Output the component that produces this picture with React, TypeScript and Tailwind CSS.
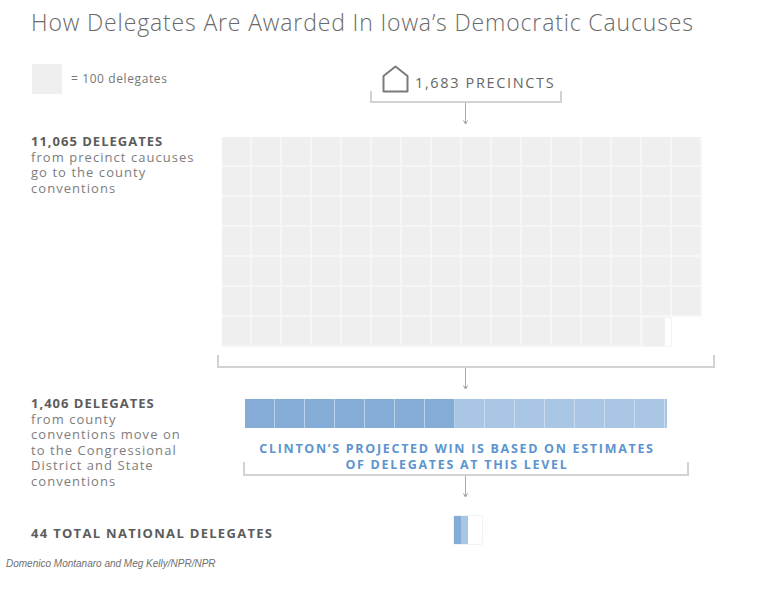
import React from "react";

const COLS = 16;
const TOTAL_COUNTY = 11065;

const Arrow = ({ className = "" }: { className?: string }) => (
  <svg width="7" height="22" viewBox="0 0 7 22" className={className}>
    <line x1="3.5" y1="0" x2="3.5" y2="20" stroke="#aaa" strokeWidth="1" />
    <path d="M1.5 17.5 L3.5 21 L5.5 17.5" fill="none" stroke="#999" strokeWidth="1" />
  </svg>
);

const House = () => (
  <svg width="27" height="28" viewBox="0 0 27 28" className="shrink-0">
    <path d="M1.5 11 L13.5 1.5 L25.5 11 V26.5 H1.5 Z" fill="none" stroke="#7a7a7a" strokeWidth="2" strokeLinejoin="round" />
  </svg>
);

const CountyGrid = () => {
  const full = Math.floor(TOTAL_COUNTY / 100);
  const frac = (TOTAL_COUNTY % 100) / 100;
  const rows = Math.ceil((full + 1) / COLS);
  const cells: React.ReactNode[] = [];
  for (let i = 0; i < rows * COLS; i++) {
    if (i < full) {
      cells.push(<div key={i} className="w-[30px] h-[30px] bg-[#efefef] border-r-2 border-b-2 border-[#f6f6f6]" />);
    } else if (i === full) {
      cells.push(
        <div key={i} className="w-[30px] h-[30px] flex border border-[#f3f3f3] rounded-[2px]">
          <div className="h-full bg-[#efefef]" style={{ width: `${frac * 34}px` }} />
        </div>
      );
    } else {
      cells.push(<div key={i} className="w-[30px] h-[30px]" />);
    }
  }
  return <div className="grid grid-cols-[repeat(16,30px)] w-[480px]">{cells}</div>;
};

const StateBar = () => {
  const clinton = 7;
  const sanders = 7;
  return (
    <div className="flex h-[29px] w-[422px]">
      {Array.from({ length: clinton }).map((_, i) => (
        <div key={`c${i}`} className="w-[30px] h-full bg-[#85acd7] border-r border-[#b9d0ea]" />
      ))}
      {Array.from({ length: sanders }).map((_, i) => (
        <div key={`s${i}`} className="w-[30px] h-full bg-[#a9c6e5] border-r border-[#cbdcf0]" />
      ))}
      <div className="w-[2px] h-full bg-[#a9c6e5]" />
    </div>
  );
};

const Label = ({ title, lines, className = "" }: { title: string; lines: string[]; className?: string }) => (
  <p className={`text-[13px] leading-[15.5px] whitespace-nowrap ${className}`}>
    <b className="font-bold text-[#5c5c5c] tracking-[1px]">{title}</b>
    <br />
    <span className="text-[#7d7d7d] tracking-[1.05px]">
      {lines.map((l, i) => (
        <React.Fragment key={l}>
          {l}
          {i < lines.length - 1 && <br />}
        </React.Fragment>
      ))}
    </span>
  </p>
);

export default function App() {
  return (
    <div className="w-[771px] h-[599px] bg-white font-['Open_Sans',sans-serif] overflow-hidden">
      {/* Title */}
      <h1 className="pl-[31px] pt-[9px] h-[44px] text-[23px] leading-[26px] font-light text-[#6a6a6a] tracking-[0.85px] whitespace-nowrap">
        How Delegates Are Awarded In Iowa’s Democratic Caucuses
      </h1>

      {/* Legend + precincts */}
      <div className="flex h-[81px]">
        <div className="w-[222px] pl-[32px] pt-[20px] flex items-start gap-[9px]">
          <div className="w-[30px] h-[30px] bg-[#efefef] shrink-0" />
          <span className="mt-[7px] text-[12px] leading-[15px] tracking-[0.6px] text-[#777] whitespace-nowrap">= 100 delegates</span>
        </div>
        <div className="flex flex-col ml-[148px] w-[192px]">
          <div className="mt-[22px] h-[27px] flex items-end gap-[6px] pl-[12px]">
            <House />
            <span className="text-[14.5px] leading-[18px] font-medium tracking-[1.65px] text-[#666] mb-[1px]">1,683 PRECINCTS</span>
          </div>
          <div className="mt-[-2px] h-[12px] border-x-2 border-b-2 border-[#d2d2d2]" />
          <Arrow className="ml-[92px]" />
        </div>
      </div>

      {/* County conventions */}
      <div className="flex">
        <div className="w-[222px] pl-[31px] pt-[9px]">
          <Label title="11,065 DELEGATES" lines={["from precinct caucuses", "go to the county", "conventions"]} />
        </div>
        <div className="pt-[12px]">
          <CountyGrid />
          <div className="ml-[-5px] mt-[8px] w-[498px] h-[13px] border-x-2 border-b-2 border-[#d2d2d2]" />
          <Arrow className="ml-[240px]" />
        </div>
      </div>

      {/* State conventions */}
      <div className="flex">
        <div className="w-[222px] pl-[31px] pt-[6px]">
          <Label
            title="1,406 DELEGATES"
            lines={["from county", "conventions move on", "to the Congressional", "District and State", "conventions"]}
          />
        </div>
        <div className="pt-[9px] flex flex-col">
          <div className="ml-[23px]">
            <StateBar />
          </div>
          <p className="ml-[23px] w-[424px] mt-[13px] text-center text-[12.5px] leading-[15.5px] font-bold tracking-[1.7px] text-[#5d94d0] whitespace-nowrap">
            CLINTON’S PROJECTED WIN IS BASED ON ESTIMATES
            <br />
            OF DELEGATES AT THIS LEVEL
          </p>
          <div className="ml-[21px] mt-[-10px] w-[446px] h-[14px] border-x-2 border-b-2 border-[#d2d2d2]" />
          <Arrow className="ml-[240px]" />
        </div>
      </div>

      {/* National */}
      <div className="flex mt-[17px] h-[30px]">
        <div className="w-[222px] pl-[31px] pt-[11px]">
          <div className="text-[13px] leading-[15px] font-bold tracking-[1.3px] text-[#5c5c5c] whitespace-nowrap">
            44 TOTAL NATIONAL DELEGATES
          </div>
        </div>
        <div className="ml-[231px] w-[30px] h-[30px] flex border border-[#f2f2f2] rounded-[2px]">
          <div className="w-[7px] h-full bg-[#85acd7]" />
          <div className="w-[7px] h-full bg-[#a9c6e5]" />
        </div>
      </div>

      {/* Credit */}
      <div className="pl-[6px] mt-[13px] text-[10px] leading-[12px] italic text-[#6f6f6f] font-['Liberation_Sans',sans-serif]">
        Domenico Montanaro and Meg Kelly/NPR/NPR
      </div>
    </div>
  );
}
